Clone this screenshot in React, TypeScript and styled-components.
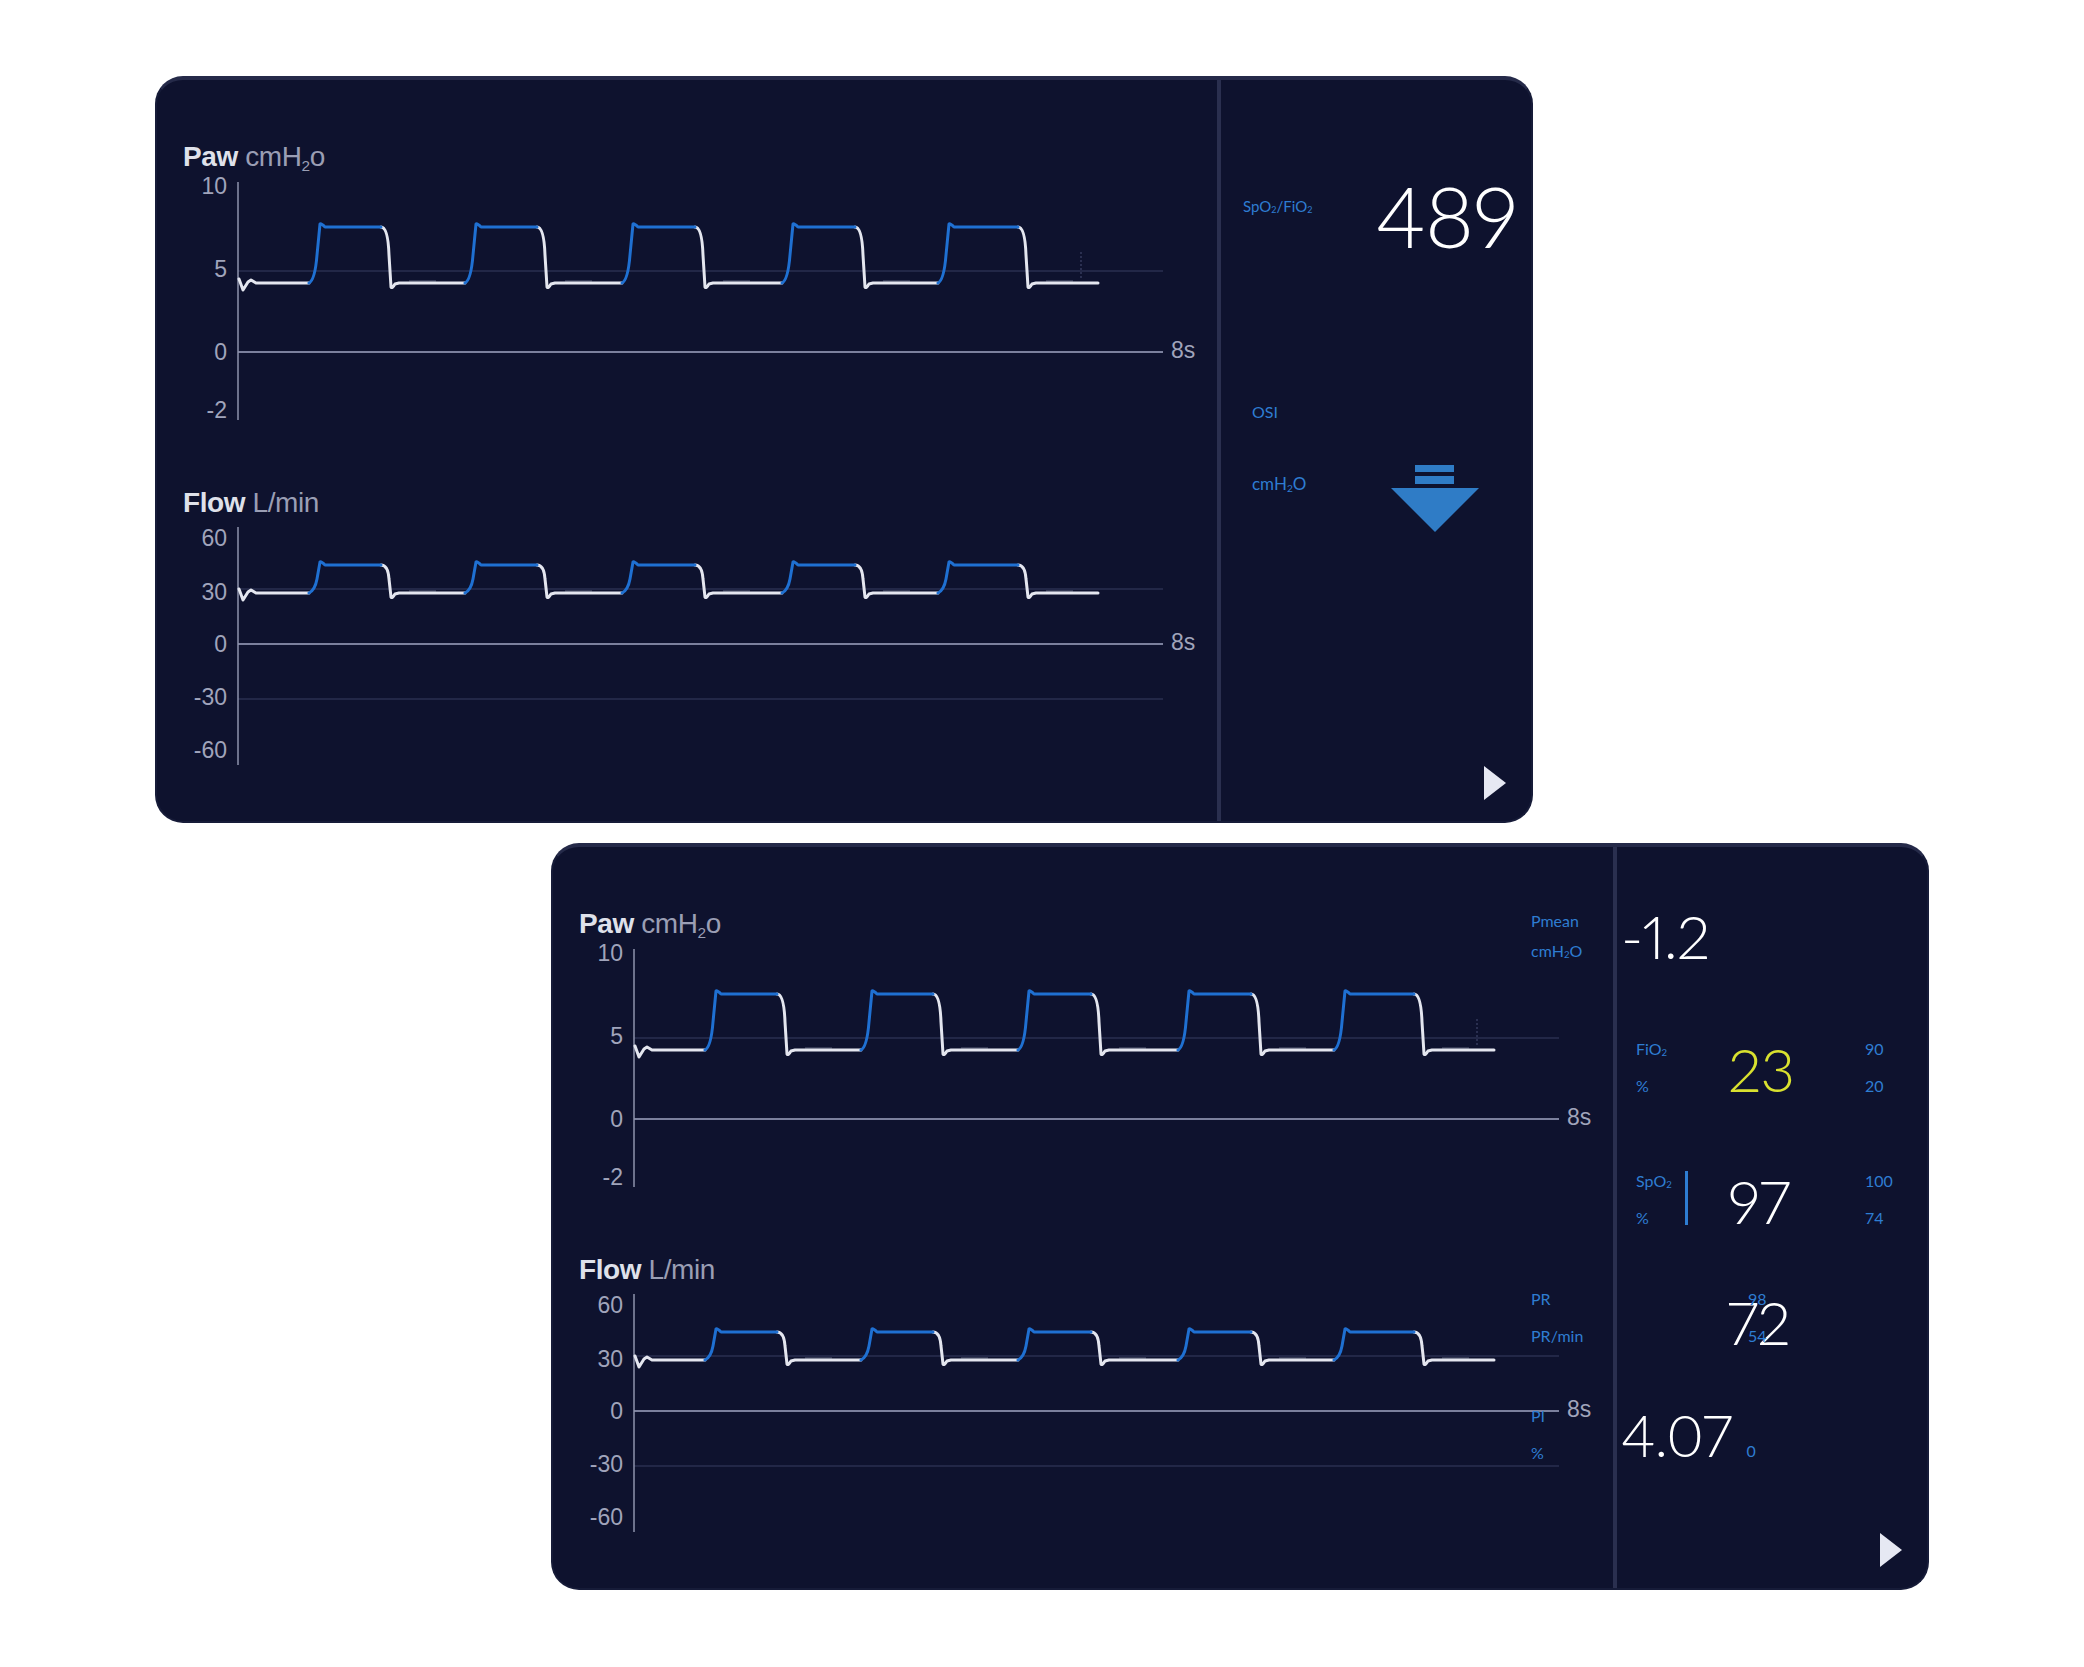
import React from "react";
import styled, { createGlobalStyle } from "styled-components";

const GlobalStyle = createGlobalStyle`
  html, body {
    margin: 0;
    padding: 0;
    background: #ffffff;
  }
  body {
    font-family: "Lato", "Noto Sans", sans-serif;
  }
`;

const NAVY = "#0e122e";
const LABEL_BLUE = "#2e7dd2";

// waveform timing, in panel pixels
const RISES = [154, 310, 467, 627, 783];
const FALLS = [226, 382, 540, 700, 863];
const TRACE_START = 84;
const TRACE_END = 943;
const AXIS_X = 83;
const LINE_END = 1008;

interface Tick {
  label: string;
  y: number;
}

interface ChartConfig {
  name: string;
  unit: React.ReactNode;
  height: number;
  ticks: Tick[];
  axis: [number, number];
  zero: number;
  grid: number[];
  base: number;
  top: number;
  cursor?: [number, number];
}

const Page = styled.div`
  width: 2084px;
  height: 1667px;
  box-sizing: border-box;
  padding-top: 76px;
  display: flex;
  flex-direction: column;
  gap: 20px;
`;

const Panel = styled.section<{ $offset: number }>`
  margin-left: ${(p) => p.$offset}px;
  width: 1378px;
  height: 747px;
  box-sizing: border-box;
  display: flex;
  background: ${NAVY};
  border: 2px solid #161b38;
  border-top: 4px solid #252a49;
  border-radius: 28px;
  overflow: hidden;
`;

const ChartArea = styled.div`
  width: 1060px;
  flex: none;
  display: flex;
  flex-direction: column;
  gap: 62px;
  padding-top: 62px;
`;

const ChartBlock = styled.div`
  display: flex;
  flex-direction: column;
`;

const ChartTitle = styled.div`
  height: 30px;
  line-height: 30px;
  padding-left: 26px;
  font-family: "Liberation Sans", Arial, sans-serif;
  font-size: 28px;
  letter-spacing: -0.4px;
  color: #9a9eb4;
  white-space: nowrap;
  b {
    color: #dfe1ea;
    font-weight: 700;
  }
`;

const TitleSub = styled.sub`
  font-size: 0.55em;
  vertical-align: -0.35em;
  line-height: 0;
`;

const Divider = styled.div`
  width: 4px;
  flex: none;
  background: #2a2f4f;
`;

const Side = styled.div<{ $padTop: number; $padLeft: number }>`
  flex: 1;
  display: flex;
  flex-direction: column;
  padding-top: ${(p) => p.$padTop}px;
  padding-left: ${(p) => p.$padLeft}px;
  color: #ffffff;
`;

const Sub = styled.sub`
  font-size: 0.6em;
  vertical-align: -0.15em;
  line-height: 0;
`;

const BlueLabel = styled.div<{ $size?: number; $lh?: number }>`
  color: ${LABEL_BLUE};
  font-size: ${(p) => p.$size ?? 16}px;
  line-height: ${(p) => p.$lh ?? 37}px;
  white-space: nowrap;
`;

const BigValue = styled.div<{ $size: number; $lh: number; $color?: string }>`
  font-family: "Lato", "Noto Sans", sans-serif;
  font-weight: 300;
  font-size: ${(p) => p.$size}px;
  line-height: ${(p) => p.$lh}px;
  font-variant-numeric: proportional-nums;
  font-feature-settings: "pnum" 1;
  letter-spacing: -1px;
  color: ${(p) => p.$color ?? "#ffffff"};
  white-space: nowrap;
`;

/* panel one, right side */

const RatioRow = styled.div`
  height: 84px;
  display: flex;
  justify-content: space-between;
  align-items: flex-start;
  padding-right: 14px;
  ${BlueLabel} {
    margin-top: 22px;
  }
`;

const OsiBlock = styled.div`
  display: flex;
  margin: 142px 0 0 9px;
`;

const OsiLabels = styled.div`
  width: 139px;
  display: flex;
  flex-direction: column;
  gap: 48px;
`;

const ArrowIcon = styled.svg`
  margin-top: 65px;
  flex: none;
`;

const PlayIcon = styled.svg`
  margin: auto 24px 20px 0;
  align-self: flex-end;
  flex: none;
`;

/* panel two, right side */

const WideRow = styled.div<{ $h: number }>`
  position: relative;
  height: ${(p) => p.$h}px;
  display: flex;
  align-items: flex-start;
`;

const GridRow = styled.div<{ $h: number }>`
  position: relative;
  height: ${(p) => p.$h}px;
  box-sizing: border-box;
  padding-left: 15px;
  display: grid;
  grid-template-columns: 95px 134px 1fr;
  align-items: start;
`;

const OverLabels = styled.div<{ $lh: number }>`
  position: absolute;
  left: -90px;
  top: 0;
  ${BlueLabel} {
    line-height: ${(p) => p.$lh}px;
  }
`;

const LabelCell = styled.div`
  display: flex;
  align-items: flex-start;
  gap: 13px;
`;

const LabelStack = styled.div`
  display: flex;
  flex-direction: column;
`;

const SignalBar = styled.div`
  width: 3px;
  height: 54px;
  margin-top: 9px;
  background: ${LABEL_BLUE};
`;

const ValueCell = styled.div<{ $pad?: number; $shift?: number }>`
  position: relative;
  padding-top: ${(p) => p.$pad ?? 0}px;
  margin-left: ${(p) => p.$shift ?? -3}px;
`;

const TinyLimits = styled.div`
  position: absolute;
  left: 21px;
  top: 0;
`;

const PiValue = styled.div`
  display: flex;
  align-items: baseline;
  gap: 15px;
  ${BlueLabel} {
    line-height: 1;
  }
`;

function risePath(r: number, f: number, b: number, t: number) {
  const mid = (t + b) / 2;
  return `M${r} ${b} Q${r + 6} ${b - 3} ${r + 8} ${mid} L${r + 11} ${t - 3} Q${r + 12} ${t - 4} ${r + 16} ${t} L${f} ${t}`;
}

function fallPath(f: number, next: number, b: number, t: number) {
  const mid = (t + b) / 2;
  return `M${f} ${t} Q${f + 7} ${t} ${f + 8} ${mid} L${f + 10} ${b + 4} Q${f + 11} ${b + 6} ${f + 14} ${b + 1} L${f + 18} ${b} L${next} ${b}`;
}

function startPath(b: number) {
  return `M${TRACE_START} ${b - 4} L${TRACE_START + 4} ${b + 7} L${TRACE_START + 9} ${b - 1} L${TRACE_START + 12} ${b - 3} L${TRACE_START + 17} ${b} L${RISES[0]} ${b}`;
}

function Chart({ cfg }: { cfg: ChartConfig }) {
  const b = cfg.base;
  const t = cfg.top;
  const blue = RISES.map((r, i) => risePath(r, FALLS[i], b, t)).join(" ");
  const white = [
    startPath(b),
    ...FALLS.map((f, i) => fallPath(f, RISES[i + 1] ?? TRACE_END, b, t)),
  ].join(" ");
  const ghost = FALLS.map((f) => `M${f + 28} ${b - 2} L${f + 55} ${b - 2}`).join(" ");

  return (
    <ChartBlock>
      <ChartTitle>
        <b>{cfg.name}</b> {cfg.unit}
      </ChartTitle>
      <svg width={1060} height={cfg.height} viewBox={`2 0 1060 ${cfg.height}`}>
        {cfg.grid.map((y) => (
          <line key={y} x1={AXIS_X} x2={LINE_END} y1={y} y2={y} stroke="#2a2f50" strokeWidth={1.5} />
        ))}
        <line x1={AXIS_X} x2={LINE_END} y1={cfg.zero} y2={cfg.zero} stroke="#7b809d" strokeWidth={2} />
        <line x1={AXIS_X} x2={AXIS_X} y1={cfg.axis[0]} y2={cfg.axis[1]} stroke="#8e93ad" strokeWidth={1.5} />
        {cfg.cursor && (
          <line
            x1={926}
            x2={926}
            y1={cfg.cursor[0]}
            y2={cfg.cursor[1]}
            stroke="#343a5c"
            strokeWidth={1.5}
            strokeDasharray="2 2"
          />
        )}
        <g fontFamily='"Liberation Sans", Arial, sans-serif' fontSize={23} fill="#a0a4bb">
          {cfg.ticks.map((tk) => (
            <text key={tk.label} x={72} y={tk.y} textAnchor="end" dominantBaseline="central">
              {tk.label}
            </text>
          ))}
          <text x={1016} y={cfg.zero - 2} dominantBaseline="central">
            8s
          </text>
        </g>
        <path d={ghost} stroke="#8c91aa" strokeWidth={2} fill="none" opacity={0.3} />
        <path d={white} stroke="#e4e6ef" strokeWidth={3} fill="none" strokeLinejoin="round" strokeLinecap="round" />
        <path d={blue} stroke="#1f70d2" strokeWidth={3} fill="none" strokeLinejoin="round" strokeLinecap="round" />
      </svg>
    </ChartBlock>
  );
}

const pawChart: ChartConfig = {
  name: "Paw",
  unit: (
    <>
      cmH<TitleSub>2</TitleSub>o
    </>
  ),
  height: 254,
  ticks: [
    { label: "10", y: 14 },
    { label: "5", y: 97 },
    { label: "0", y: 180 },
    { label: "-2", y: 238 },
  ],
  axis: [10, 248],
  zero: 180,
  grid: [99],
  base: 111,
  top: 55,
  cursor: [80, 108],
};

const flowChart: ChartConfig = {
  name: "Flow",
  unit: "L/min",
  height: 259,
  ticks: [
    { label: "60", y: 20 },
    { label: "30", y: 74 },
    { label: "0", y: 126 },
    { label: "-30", y: 179 },
    { label: "-60", y: 232 },
  ],
  axis: [9, 247],
  zero: 126,
  grid: [71, 181],
  base: 75,
  top: 47,
};

function Charts() {
  return (
    <ChartArea>
      <Chart cfg={pawChart} />
      <Chart cfg={flowChart} />
    </ChartArea>
  );
}

function Play() {
  return (
    <PlayIcon width={24} height={36} viewBox="0 0 24 36">
      <polygon points="1,1 23,18 1,35" fill="#e6e8f3" />
    </PlayIcon>
  );
}

function TrendArrow() {
  return (
    <ArrowIcon width={88} height={68} viewBox="0 0 88 68">
      <rect x={24} y={0} width={39} height={7} fill="#2f7cc6" />
      <rect x={24} y={11} width={39} height={8} fill="#2f7cc6" />
      <polygon points="0,23 88,23 44,67" fill="#2f7cc6" />
    </ArrowIcon>
  );
}

function RatioSide() {
  return (
    <Side $padTop={94} $padLeft={22}>
      <RatioRow>
        <BlueLabel $size={15} $lh={20}>
          SpO<Sub>2</Sub>/FiO<Sub>2</Sub>
        </BlueLabel>
        <BigValue $size={84} $lh={84}>
          489
        </BigValue>
      </RatioRow>
      <OsiBlock>
        <OsiLabels>
          <BlueLabel $lh={24}>OSI</BlueLabel>
          <BlueLabel $lh={24} $size={17}>
            cmH<Sub>2</Sub>O
          </BlueLabel>
        </OsiLabels>
        <TrendArrow />
      </OsiBlock>
      <Play />
    </Side>
  );
}

function VitalsSide() {
  return (
    <Side $padTop={59} $padLeft={4}>
      <WideRow $h={124}>
        <OverLabels $lh={30}>
          <BlueLabel>Pmean</BlueLabel>
          <BlueLabel>
            cmH<Sub>2</Sub>O
          </BlueLabel>
        </OverLabels>
        <BigValue $size={60} $lh={60}>
          -1.2
        </BigValue>
      </WideRow>

      <GridRow $h={132}>
        <LabelStack>
          <BlueLabel>
            FiO<Sub>2</Sub>
          </BlueLabel>
          <BlueLabel>%</BlueLabel>
        </LabelStack>
        <ValueCell>
          <BigValue $size={60} $lh={78} $color="#d9e12f">
            23
          </BigValue>
        </ValueCell>
        <LabelStack>
          <BlueLabel>90</BlueLabel>
          <BlueLabel>20</BlueLabel>
        </LabelStack>
      </GridRow>

      <GridRow $h={118}>
        <LabelCell>
          <LabelStack>
            <BlueLabel>
              SpO<Sub>2</Sub>
            </BlueLabel>
            <BlueLabel>%</BlueLabel>
          </LabelStack>
          <SignalBar />
        </LabelCell>
        <ValueCell>
          <BigValue $size={60} $lh={78}>
            97
          </BigValue>
        </ValueCell>
        <LabelStack>
          <BlueLabel>100</BlueLabel>
          <BlueLabel>74</BlueLabel>
        </LabelStack>
      </GridRow>

      <GridRow $h={117}>
        <OverLabels $lh={37}>
          <BlueLabel>PR</BlueLabel>
          <BlueLabel>PR/min</BlueLabel>
        </OverLabels>
        <span />
        <ValueCell $pad={3} $shift={-4}>
          <BigValue $size={60} $lh={78}>
            72
          </BigValue>
          <TinyLimits>
            <BlueLabel>98</BlueLabel>
            <BlueLabel>54</BlueLabel>
          </TinyLimits>
        </ValueCell>
      </GridRow>

      <WideRow $h={90}>
        <OverLabels $lh={37}>
          <BlueLabel>PI</BlueLabel>
          <BlueLabel>%</BlueLabel>
        </OverLabels>
        <PiValue>
          <BigValue $size={58} $lh={76}>
            4.07
          </BigValue>
          <BlueLabel>0</BlueLabel>
        </PiValue>
      </WideRow>
      <Play />
    </Side>
  );
}

export default function App() {
  return (
    <>
      <GlobalStyle />
      <Page>
        <Panel $offset={155}>
          <Charts />
          <Divider />
          <RatioSide />
        </Panel>
        <Panel $offset={551}>
          <Charts />
          <Divider />
          <VitalsSide />
        </Panel>
      </Page>
    </>
  );
}
